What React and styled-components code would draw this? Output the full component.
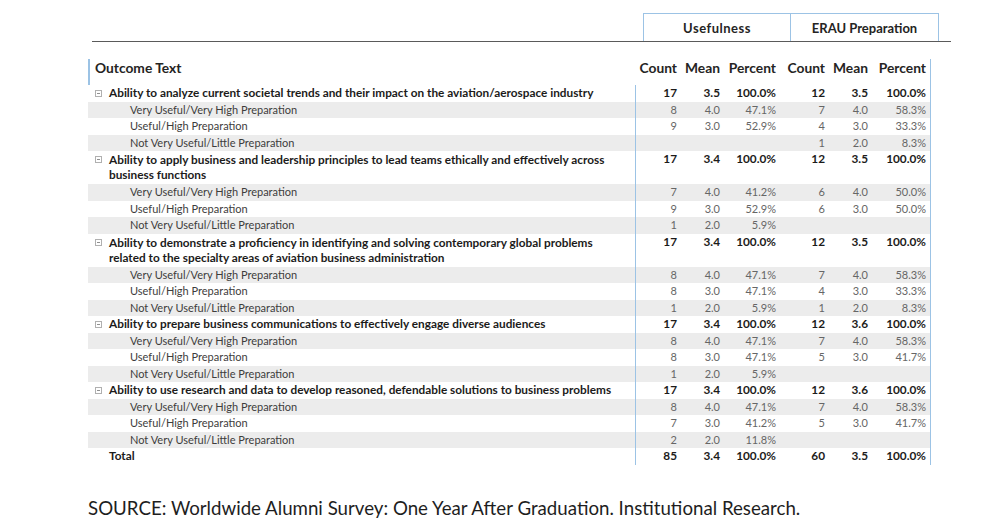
import React from "react";
import styled, { createGlobalStyle } from "styled-components";

const GlobalStyle = createGlobalStyle`
  body {
    margin: 0;
    background: #ffffff;
    font-family: "Lato", "Open Sans", sans-serif;
  }
`;

const Page = styled.div`
  width: 1004px;
  height: 523px;
  background: #ffffff;
  padding-top: 13px;
  box-sizing: border-box;
`;

const TitleBar = styled.div`
  margin-left: 92px;
  width: 859px;
  border-bottom: 1px solid #5a5a5a;
  display: flex;
  padding-left: 551px;
  box-sizing: border-box;
`;

const GroupBox = styled.div`
  width: 148px;
  height: 28px;
  border: 1px solid #9cc3e5;
  border-bottom: none;
  border-left: ${(props) => (props.first ? "1px solid #9cc3e5" : "none")};
  box-sizing: border-box;
  display: flex;
  align-items: center;
  justify-content: center;
  font-size: 13px;
  font-weight: 700;
  letter-spacing: ${(props) => (props.first ? "0.5px" : "0")};
  color: #252423;
`;

const Table = styled.div`
  margin: 17px 0 0 88px;
  width: 842px;
  border-right: 1px solid #9cc3e5;
`;

const Row = styled.div`
  display: grid;
  grid-template-columns: 547px 46px 43px 56px 49px 43px 58px;
  background: ${(props) => (props.shaded ? "#ececec" : "transparent")};
  line-height: 16.5px;
  font-size: ${(props) => (props.strong ? "11.8px" : "11px")};
  color: ${(props) => (props.strong ? "#1c1b1a" : "#666666")};
  font-weight: ${(props) => (props.strong ? 700 : 400)};
`;

const HeadRow = styled(Row)`
  height: 26px;
  line-height: 18px;
  font-size: 13.8px;
  font-weight: 700;
  color: #252423;
`;

const HeadLabel = styled.div`
  border-left: 2px solid #9cc3e5;
  padding-left: 5px;
`;

const Label = styled.div`
  display: flex;
  align-items: flex-start;
  padding-left: ${(props) => (props.indent ? "42px" : "7px")};
  white-space: nowrap;
  color: ${(props) => (props.indent ? "#3e3d3c" : "inherit")};
`;

const Lines = styled.div`
  display: flex;
  flex-direction: column;
  padding: ${(props) => (props.multi ? "1px 0 2px" : "0")};
  padding-left: ${(props) => (props.pad ? "14px" : "0")};
  line-height: ${(props) => (props.multi ? "15px" : "16.5px")};
`;

const Expander = styled.span`
  position: relative;
  width: 7px;
  height: 7px;
  margin-top: 5px;
  margin-right: 7px;
  border: 1px solid #b0b0b0;
  box-sizing: border-box;
  flex: none;

  &::after {
    content: "";
    position: absolute;
    left: 1px;
    right: 1px;
    top: 2px;
    height: 1px;
    background: #909090;
  }
`;

const Num = styled.div`
  text-align: right;
  padding-right: 4px;
  border-left: ${(props) => (props.edge ? "1px solid #9cc3e5" : "none")};
`;

const Source = styled.div`
  margin: 32px 0 0 88px;
  font-size: 18.7px;
  color: #1e1e1e;
  font-family: "Lato", "Open Sans", sans-serif;
`;

const groups = [
  {
    lines: [
      "Ability to analyze current societal trends and their impact on the aviation/aerospace industry",
    ],
    values: ["17", "3.5", "100.0%", "12", "3.5", "100.0%"],
    subs: [
      ["8", "4.0", "47.1%", "7", "4.0", "58.3%"],
      ["9", "3.0", "52.9%", "4", "3.0", "33.3%"],
      ["", "", "", "1", "2.0", "8.3%"],
    ],
  },
  {
    lines: [
      "Ability to apply business and leadership principles to lead teams ethically and effectively across",
      "business functions",
    ],
    values: ["17", "3.4", "100.0%", "12", "3.5", "100.0%"],
    subs: [
      ["7", "4.0", "41.2%", "6", "4.0", "50.0%"],
      ["9", "3.0", "52.9%", "6", "3.0", "50.0%"],
      ["1", "2.0", "5.9%", "", "", ""],
    ],
  },
  {
    lines: [
      "Ability to demonstrate a proficiency in identifying and solving contemporary global problems",
      "related to the specialty areas of aviation business administration",
    ],
    values: ["17", "3.4", "100.0%", "12", "3.5", "100.0%"],
    subs: [
      ["8", "4.0", "47.1%", "7", "4.0", "58.3%"],
      ["8", "3.0", "47.1%", "4", "3.0", "33.3%"],
      ["1", "2.0", "5.9%", "1", "2.0", "8.3%"],
    ],
  },
  {
    lines: [
      "Ability to prepare business communications to effectively engage diverse audiences",
    ],
    values: ["17", "3.4", "100.0%", "12", "3.6", "100.0%"],
    subs: [
      ["8", "4.0", "47.1%", "7", "4.0", "58.3%"],
      ["8", "3.0", "47.1%", "5", "3.0", "41.7%"],
      ["1", "2.0", "5.9%", "", "", ""],
    ],
  },
  {
    lines: [
      "Ability to use research and data to develop reasoned, defendable solutions to business problems",
    ],
    values: ["17", "3.4", "100.0%", "12", "3.6", "100.0%"],
    subs: [
      ["8", "4.0", "47.1%", "7", "4.0", "58.3%"],
      ["7", "3.0", "41.2%", "5", "3.0", "41.7%"],
      ["2", "2.0", "11.8%", "", "", ""],
    ],
  },
];

const subLabels = [
  "Very Useful/Very High Preparation",
  "Useful/High Preparation",
  "Not Very Useful/Little Preparation",
];

function Values({ values }) {
  return values.map((v, i) => (
    <Num key={i} edge={i === 0}>
      {v}
    </Num>
  ));
}

function App() {
  return (
    <Page>
      <GlobalStyle />
      <TitleBar>
        <GroupBox first>Usefulness</GroupBox>
        <GroupBox>ERAU Preparation</GroupBox>
      </TitleBar>

      <Table>
        <HeadRow>
          <HeadLabel>Outcome Text</HeadLabel>
          <Num>Count</Num>
          <Num>Mean</Num>
          <Num>Percent</Num>
          <Num>Count</Num>
          <Num>Mean</Num>
          <Num>Percent</Num>
        </HeadRow>

        {groups.map((g, gi) => (
          <React.Fragment key={gi}>
            <Row strong>
              <Label>
                <Expander />
                <Lines multi={g.lines.length > 1}>
                  {g.lines.map((line, li) => (
                    <span key={li}>{line}</span>
                  ))}
                </Lines>
              </Label>
              <Values values={g.values} />
            </Row>
            {g.subs.map((s, si) => (
              <Row key={si} shaded={si !== 1}>
                <Label indent>{subLabels[si]}</Label>
                <Values values={s} />
              </Row>
            ))}
          </React.Fragment>
        ))}

        <Row strong>
          <Label>
            <Lines pad>Total</Lines>
          </Label>
          <Values values={["85", "3.4", "100.0%", "60", "3.5", "100.0%"]} />
        </Row>
      </Table>

      <Source>
        SOURCE: Worldwide Alumni Survey: One Year After Graduation. Institutional
        Research.
      </Source>
    </Page>
  );
}

export default App;
